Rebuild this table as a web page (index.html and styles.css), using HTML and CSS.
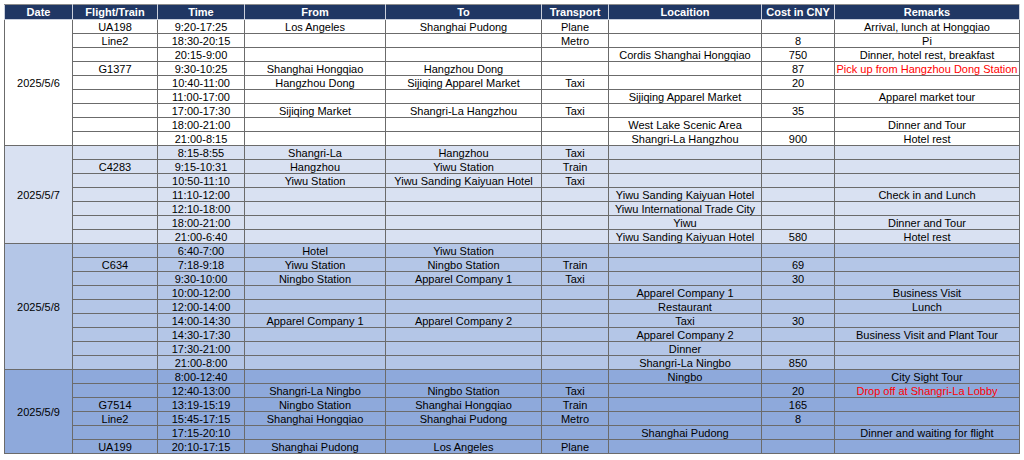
FILE: index.html
```html
<!DOCTYPE html>
<html>
<head>
<meta charset="utf-8">
<link rel="stylesheet" href="styles.css">
</head>
<body>
<table class="plan">
<colgroup>
<col class="c-date"><col class="c-flight"><col class="c-time"><col class="c-from"><col class="c-to"><col class="c-trans"><col class="c-loc"><col class="c-cost"><col class="c-rem">
</colgroup>
<thead>
<tr><th>Date</th><th>Flight/Train</th><th>Time</th><th>From</th><th>To</th><th>Transport</th><th>Locaition</th><th>Cost in CNY</th><th>Remarks</th></tr>
</thead>
<tbody class="g1">
<tr><td class="date" rowspan="9">2025/5/6</td><td>UA198</td><td>9:20-17:25</td><td>Los Angeles</td><td>Shanghai Pudong</td><td>Plane</td><td></td><td></td><td>Arrival, lunch at Hongqiao</td></tr>
<tr><td>Line2</td><td>18:30-20:15</td><td></td><td></td><td>Metro</td><td></td><td>8</td><td>Pi</td></tr>
<tr><td></td><td>20:15-9:00</td><td></td><td></td><td></td><td>Cordis Shanghai Hongqiao</td><td>750</td><td>Dinner, hotel rest, breakfast</td></tr>
<tr><td>G1377</td><td>9:30-10:25</td><td>Shanghai Hongqiao</td><td>Hangzhou Dong</td><td></td><td></td><td>87</td><td class="red">Pick up from Hangzhou Dong Station</td></tr>
<tr><td></td><td>10:40-11:00</td><td>Hangzhou Dong</td><td>Sijiqing Apparel Market</td><td>Taxi</td><td></td><td>20</td><td></td></tr>
<tr><td></td><td>11:00-17:00</td><td></td><td></td><td></td><td>Sijiqing Apparel Market</td><td></td><td>Apparel market tour</td></tr>
<tr><td></td><td>17:00-17:30</td><td>Sijiqing Market</td><td>Shangri-La Hangzhou</td><td>Taxi</td><td></td><td>35</td><td></td></tr>
<tr><td></td><td>18:00-21:00</td><td></td><td></td><td></td><td>West Lake Scenic Area</td><td></td><td>Dinner and Tour</td></tr>
<tr><td></td><td>21:00-8:15</td><td></td><td></td><td></td><td>Shangri-La Hangzhou</td><td>900</td><td>Hotel rest</td></tr>
</tbody>
<tbody class="g2">
<tr><td class="date" rowspan="7">2025/5/7</td><td></td><td>8:15-8:55</td><td>Shangri-La</td><td>Hangzhou</td><td>Taxi</td><td></td><td></td><td></td></tr>
<tr><td>C4283</td><td>9:15-10:31</td><td>Hangzhou</td><td>Yiwu Station</td><td>Train</td><td></td><td></td><td></td></tr>
<tr><td></td><td>10:50-11:10</td><td>Yiwu Station</td><td>Yiwu Sanding Kaiyuan Hotel</td><td>Taxi</td><td></td><td></td><td></td></tr>
<tr><td></td><td>11:10-12:00</td><td></td><td></td><td></td><td>Yiwu Sanding Kaiyuan Hotel</td><td></td><td>Check in and Lunch</td></tr>
<tr><td></td><td>12:10-18:00</td><td></td><td></td><td></td><td>Yiwu International Trade City</td><td></td><td></td></tr>
<tr><td></td><td>18:00-21:00</td><td></td><td></td><td></td><td>Yiwu</td><td></td><td>Dinner and Tour</td></tr>
<tr><td></td><td>21:00-6:40</td><td></td><td></td><td></td><td>Yiwu Sanding Kaiyuan Hotel</td><td>580</td><td>Hotel rest</td></tr>
</tbody>
<tbody class="g3">
<tr><td class="date" rowspan="9">2025/5/8</td><td></td><td>6:40-7:00</td><td>Hotel</td><td>Yiwu Station</td><td></td><td></td><td></td><td></td></tr>
<tr><td>C634</td><td>7:18-9:18</td><td>Yiwu Station</td><td>Ningbo Station</td><td>Train</td><td></td><td>69</td><td></td></tr>
<tr><td></td><td>9:30-10:00</td><td>Ningbo Station</td><td>Apparel Company 1</td><td>Taxi</td><td></td><td>30</td><td></td></tr>
<tr><td></td><td>10:00-12:00</td><td></td><td></td><td></td><td>Apparel Company 1</td><td></td><td>Business Visit</td></tr>
<tr><td></td><td>12:00-14:00</td><td></td><td></td><td></td><td>Restaurant</td><td></td><td>Lunch</td></tr>
<tr><td></td><td>14:00-14:30</td><td>Apparel Company 1</td><td>Apparel Company 2</td><td></td><td>Taxi</td><td>30</td><td></td></tr>
<tr><td></td><td>14:30-17:30</td><td></td><td></td><td></td><td>Apparel Company 2</td><td></td><td>Business Visit and Plant Tour</td></tr>
<tr><td></td><td>17:30-21:00</td><td></td><td></td><td></td><td>Dinner</td><td></td><td></td></tr>
<tr><td></td><td>21:00-8:00</td><td></td><td></td><td></td><td>Shangri-La Ningbo</td><td>850</td><td></td></tr>
</tbody>
<tbody class="g4">
<tr><td class="date" rowspan="6">2025/5/9</td><td></td><td>8:00-12:40</td><td></td><td></td><td></td><td>Ningbo</td><td></td><td>City Sight Tour</td></tr>
<tr><td></td><td>12:40-13:00</td><td>Shangri-La Ningbo</td><td>Ningbo Station</td><td>Taxi</td><td></td><td>20</td><td class="red">Drop off at Shangri-La Lobby</td></tr>
<tr><td>G7514</td><td>13:19-15:19</td><td>Ningbo Station</td><td>Shanghai Hongqiao</td><td>Train</td><td></td><td>165</td><td></td></tr>
<tr><td>Line2</td><td>15:45-17:15</td><td>Shanghai Hongqiao</td><td>Shanghai Pudong</td><td>Metro</td><td></td><td>8</td><td></td></tr>
<tr><td></td><td>17:15-20:10</td><td></td><td></td><td></td><td>Shanghai Pudong</td><td></td><td>Dinner and waiting for flight</td></tr>
<tr><td>UA199</td><td>20:10-17:15</td><td>Shanghai Pudong</td><td>Los Angeles</td><td>Plane</td><td></td><td></td><td></td></tr>
</tbody>
</table>
</body>
</html>
```

FILE: styles.css
```css
html, body {
  margin: 0;
  padding: 0;
  background: #ffffff;
}
body {
  padding: 4px 0 0 4px;
}
.plan {
  border-collapse: collapse;
  table-layout: fixed;
  width: 1015px;
  font-family: "Liberation Sans", Arial, sans-serif;
  font-size: 11px;
  color: #000;
  border: 1px solid #8c8c8c;
}
.c-date { width: 68px; }
.c-flight { width: 85px; }
.c-time { width: 87px; }
.c-from { width: 141px; }
.c-to { width: 156px; }
.c-trans { width: 67px; }
.c-loc { width: 153px; }
.c-cost { width: 73px; }
.c-rem { width: 185px; }
.plan th {
  background: #203764;
  color: #fff;
  font-weight: bold;
  height: 14px;
  padding: 0;
  line-height: 13px;
  text-align: center;
  border: 1px solid #c9cfdc;
  border-top-color: #8c8c8c;
}
.plan td {
  height: 13px;
  padding: 0;
  line-height: 12px;
  text-align: center;
  white-space: nowrap;
  overflow: hidden;
  border: 1px solid #6b6b6b;
}
.plan td.date {
  vertical-align: middle;
}
.plan td.red {
  color: #ff0000;
}
.g1 td { background: #ffffff; }
.g2 td { background: #d9e1f2; }
.g3 td { background: #b4c6e7; }
.g4 td { background: #8ea9db; }
```
